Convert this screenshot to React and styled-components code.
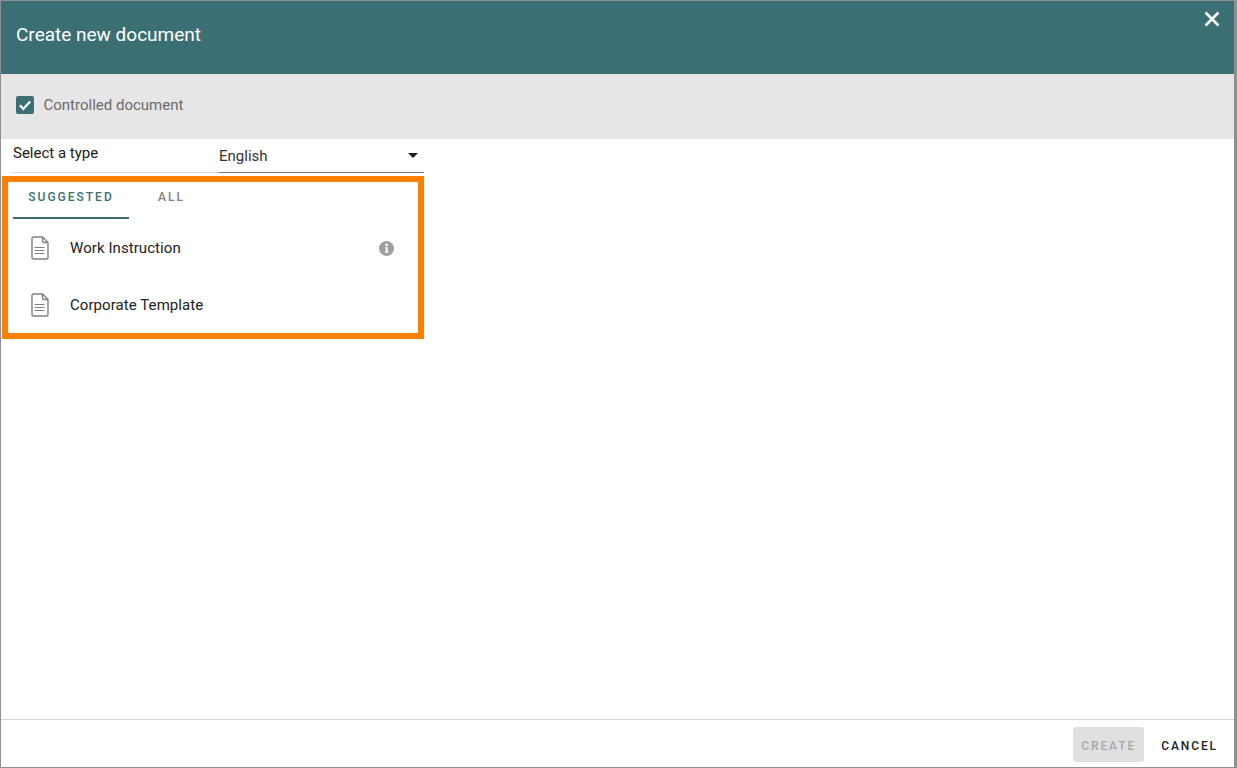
import React from "react";
import styled, { createGlobalStyle } from "styled-components";

const GlobalStyle = createGlobalStyle`
  html, body {
    margin: 0;
    padding: 0;
    height: 100%;
    background: #ffffff;
    font-family: Roboto, "Liberation Sans", sans-serif;
  }
  #root {
    height: 100%;
  }
`;

const Backdrop = styled.div`
  width: 1237px;
  height: 768px;
  box-sizing: border-box;
  background: #8f8f8f;
  padding: 1px 3px 1px 1px;
  overflow: hidden;
`;

const Dialog = styled.div`
  height: 100%;
  background: #ffffff;
  display: flex;
  flex-direction: column;
`;

const Header = styled.div`
  height: 73px;
  flex: none;
  box-sizing: border-box;
  background: #3a7074;
  display: flex;
  align-items: center;
  justify-content: space-between;
  padding: 0 13px 6px 15px;
`;

const Title = styled.h1`
  margin: 0;
  font-size: 19px;
  font-weight: 400;
  color: #ffffff;
`;

const CloseButton = styled.button`
  align-self: flex-start;
  margin-top: 9px;
  padding: 0;
  width: 18px;
  height: 18px;
  border: 0;
  background: none;
  display: block;
`;

const ControlBand = styled.div`
  height: 65px;
  flex: none;
  box-sizing: border-box;
  background: #e6e6e6;
  display: flex;
  align-items: center;
  gap: 10px;
  padding: 0 15px 4px 14.5px;
`;

const CheckBox = styled.span`
  width: 18px;
  height: 18px;
  border-radius: 2px;
  background: #3a7074;
  display: flex;
  align-items: center;
  justify-content: center;
`;

const CheckLabel = styled.span`
  font-size: 15px;
  color: #6b6b6b;
`;

const TypeRow = styled.div`
  height: 34px;
  flex: none;
  width: 411px;
  margin-left: 12px;
  display: flex;
`;

const TypeLabel = styled.div`
  width: 206px;
  flex: none;
  box-sizing: border-box;
  border-bottom: 1px solid #d9d9d9;
  font-size: 15px;
  line-height: 28px;
  color: #212121;
`;

const LangSelect = styled.div`
  flex: 1;
  box-sizing: border-box;
  border-bottom: 1px solid #7a7a7a;
  display: flex;
  align-items: center;
  justify-content: space-between;
  padding: 0 6px 0 0;
  font-size: 15px;
  color: #333333;
`;

const Caret = styled.span`
  width: 0;
  height: 0;
  border-left: 5px solid transparent;
  border-right: 5px solid transparent;
  border-top: 5px solid #1a1a1a;
`;

const Highlight = styled.section`
  box-sizing: border-box;
  width: 422px;
  height: 163px;
  flex: none;
  margin: 3px 0 0 1px;
  border: 6px solid #ff8000;
  padding: 0 0 0 5px;
`;

const Tabs = styled.div`
  display: flex;
  height: 37px;
`;

const Tab = styled.div`
  box-sizing: border-box;
  width: ${(props) => props.$width}px;
  height: 37px;
  padding-bottom: 6px;
  display: flex;
  align-items: center;
  justify-content: center;
  font-size: 12px;
  font-weight: 500;
  letter-spacing: 2px;
  color: ${(props) => (props.$active ? "#3a7074" : "#808080")};
  border-bottom: 2px solid ${(props) => (props.$active ? "#3a7074" : "transparent")};
`;

const List = styled.div`
  display: flex;
  flex-direction: column;
`;

const Item = styled.div`
  height: 57px;
  display: flex;
  align-items: center;
  padding: 0 24px 0 18px;
  font-size: 15px;
  letter-spacing: 0.07px;
  color: #212121;
`;

const ItemName = styled.span`
  margin-left: 21px;
  flex: 1;
`;

const InfoGlyph = styled.svg`
  margin-top: 1px;
`;

const Footer = styled.div`
  margin-top: auto;
  height: 48px;
  flex: none;
  box-sizing: border-box;
  border-top: 1px solid #d4d4d4;
  display: flex;
  align-items: center;
  justify-content: flex-end;
  padding: 1px 16px 0 0;
  gap: 17px;
`;

const FooterButton = styled.button`
  border: 0;
  padding: 3px 0 0;
  font-family: inherit;
  font-size: 12px;
  font-weight: 500;
  letter-spacing: 1.9px;
  border-radius: 3px;
  background: ${(props) => (props.$disabled ? "#e0e0e0" : "transparent")};
  color: ${(props) => (props.$disabled ? "#a8a8a8" : "#212121")};
  width: ${(props) => (props.$disabled ? "71px" : "auto")};
  height: 35px;
`;

const DocIcon = () => (
  <svg width="18" height="24" viewBox="0 0 18 24" fill="none" stroke="#808080" strokeWidth="1.4">
    <path d="M2.5 1H11.5L17 6.5V21.5Q17 23 15.5 23H2.5Q1 23 1 21.5V2.5Q1 1 2.5 1Z" />
    <path d="M11.5 1V5Q11.5 6.5 13 6.5H17" />
    <path d="M3.5 11.5H13.5M3.5 14.5H13.5M3.5 17.5H13.5" strokeWidth="1.2" />
  </svg>
);

const InfoIcon = () => (
  <InfoGlyph width="15" height="15" viewBox="0 0 15 15">
    <circle cx="7.5" cy="7.5" r="7.5" fill="#9e9e9e" />
    <circle cx="7.6" cy="3.9" r="1.3" fill="#ffffff" />
    <path d="M5.9 6.2H8.7V10.6H9.6V11.8H5.8V10.6H6.8V7.4H5.9Z" fill="#ffffff" />
  </InfoGlyph>
);

const App = () => {
  return (
    <>
      <GlobalStyle />
      <Backdrop>
        <Dialog>
          <Header>
            <Title>Create new document</Title>
            <CloseButton aria-label="Close">
              <svg width="18" height="18" viewBox="0 0 18 18" stroke="#ffffff" strokeWidth="2.6">
                <path d="M2.5 2.5L15.5 15.5M15.5 2.5L2.5 15.5" />
              </svg>
            </CloseButton>
          </Header>
          <ControlBand>
            <CheckBox>
              <svg width="14" height="14" viewBox="0 0 14 14" fill="none" stroke="#ffffff" strokeWidth="2.2">
                <path d="M1.8 7.2L5.3 10.8L12.2 3.4" />
              </svg>
            </CheckBox>
            <CheckLabel>Controlled document</CheckLabel>
          </ControlBand>
          <TypeRow>
            <TypeLabel>Select a type</TypeLabel>
            <LangSelect>
              English
              <Caret />
            </LangSelect>
          </TypeRow>
          <Highlight>
            <Tabs>
              <Tab $active $width={116}>SUGGESTED</Tab>
              <Tab $width={85}>ALL</Tab>
            </Tabs>
            <List>
              <Item>
                <DocIcon />
                <ItemName>Work Instruction</ItemName>
                <InfoIcon />
              </Item>
              <Item>
                <DocIcon />
                <ItemName>Corporate Template</ItemName>
              </Item>
            </List>
          </Highlight>
          <Footer>
            <FooterButton $disabled>CREATE</FooterButton>
            <FooterButton>CANCEL</FooterButton>
          </Footer>
        </Dialog>
      </Backdrop>
    </>
  );
};

export default App;
